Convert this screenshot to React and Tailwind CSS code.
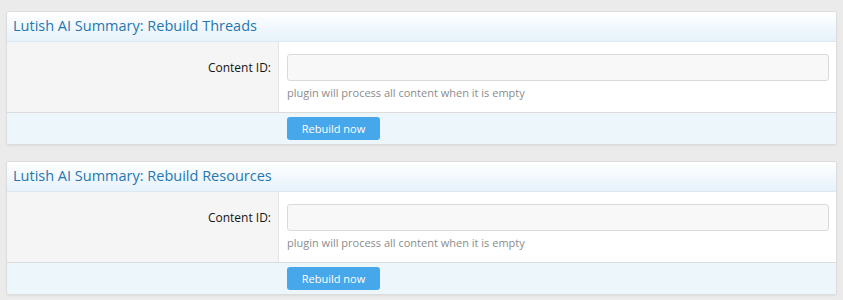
import React from "react";

function Panel({ title }) {
  return (
    <div className="border border-[#dcdcdc] rounded-[3px] bg-white shadow-[0_1px_2px_rgba(0,0,0,0.06)] overflow-hidden">
      <div className="h-[30px] flex items-center px-[6px] border-b border-[#dfe8ef] bg-gradient-to-b from-[#ffffff] to-[#e6f2fb]">
        <h2 className="text-[14.5px] text-[#2577b1] leading-none">{title}</h2>
      </div>
      <div className="flex h-[70px]">
        <div className="w-[272px] shrink-0 bg-[#f5f5f5] border-r border-[#e3e3e3] flex justify-end pt-[16px] pr-[7px]">
          <span className="text-[12px] text-[#141414] leading-[20px]">Content ID:</span>
        </div>
        <div className="flex-1 pl-[8px] pr-[7px] pt-[12px]">
          <div className="h-[27px] rounded-[3px] border border-[#dadada] bg-[#f8f8f8]" />
          <div className="text-[11px] text-[#8c8c8c] mt-[4px] leading-[16px]">
            plugin will process all content when it is empty
          </div>
        </div>
      </div>
      <div className="h-[32px] border-t border-[#dcdcdc] bg-[#edf6fb] flex items-center pl-[280px]">
        <button className="w-[93px] h-[23px] rounded-[3px] bg-[#47a7eb] text-white text-[11px] leading-none">
          Rebuild now
        </button>
      </div>
    </div>
  );
}

export default function App() {
  return (
    <div
      className="w-[843px] h-[300px] bg-[#ebebeb] px-[6px] pt-[11px] flex flex-col gap-[16px]"
      style={{ fontFamily: '"Open Sans", "Noto Sans", sans-serif' }}
    >
      <Panel title="Lutish AI Summary: Rebuild Threads" />
      <Panel title="Lutish AI Summary: Rebuild Resources" />
    </div>
  );
}
